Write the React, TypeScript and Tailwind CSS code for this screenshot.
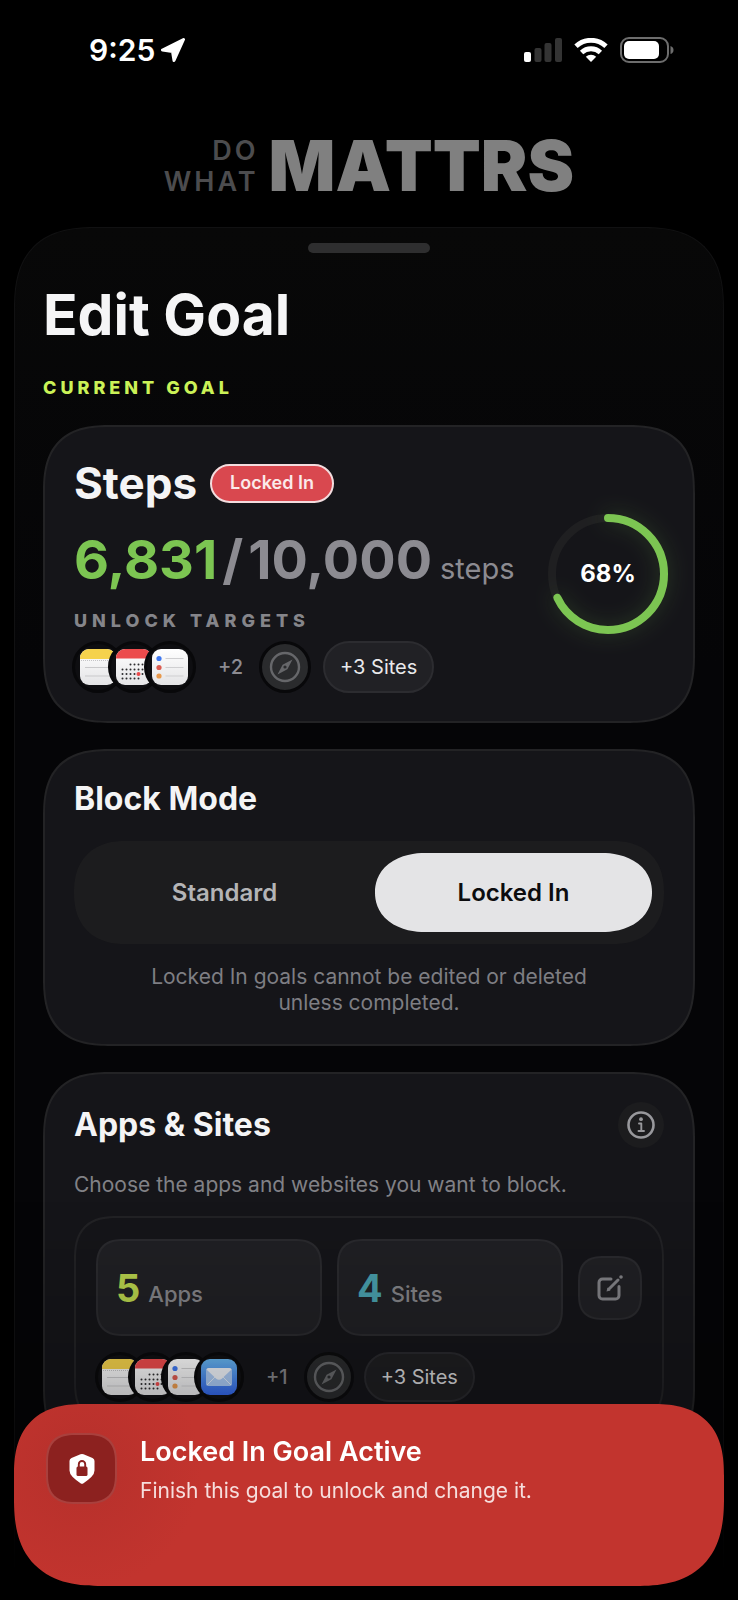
import type { ReactNode } from "react";

const notes = (
  <svg viewBox="0 0 36 36" className="h-9 w-9">
    <defs>
      <linearGradient id="paper" x1="0" y1="0" x2="0" y2="1">
        <stop offset="0" stopColor="#ffffff" />
        <stop offset="1" stopColor="#e4e4e6" />
      </linearGradient>
    </defs>
    <rect width="36" height="36" rx="9" fill="url(#paper)" />
    <path d="M0 10V9a9 9 0 0 1 9-9h18a9 9 0 0 1 9 9v1z" fill="#f5d24c" />
    <path d="M1 11.500h34" stroke="#c4c4c6" strokeWidth="1" strokeDasharray="1 1" />
    <path d="M5 18.500h26M5 27h26" stroke="#c9c9cb" strokeWidth="1" />
  </svg>
);

const calendar = (
  <svg viewBox="0 0 36 36" className="h-9 w-9">
    <rect width="36" height="36" rx="9" fill="url(#paper)" />
    <path d="M0 9.500V9a9 9 0 0 1 9-9h18a9 9 0 0 1 9 9v.5z" fill="#ec4b4c" />
    <g stroke="#2c2c2e" strokeWidth="2" strokeLinecap="round" strokeDasharray="0 4">
      <path d="M14.500 15.500h17" />
      <path d="M6.500 20.500h25" />
      <path d="M6.500 25h25" />
      <path d="M6.500 29.500h17" />
    </g>
    <circle cx="22.500" cy="25" r="2" fill="#ec4b4c" />
  </svg>
);

const reminders = (
  <svg viewBox="0 0 36 36" className="h-9 w-9">
    <rect width="36" height="36" rx="9" fill="url(#paper)" />
    <path d="M13.500 9.500h18M13.500 18.500h18M13.500 27h18" stroke="#cfcfd1" strokeWidth="1" />
    <circle cx="7" cy="9.500" r="2.600" fill="#3f78f0" />
    <circle cx="7" cy="18.500" r="2.600" fill="#dc5b50" />
    <circle cx="7" cy="27" r="2.600" fill="#e8994c" />
  </svg>
);

const mail = (
  <svg viewBox="0 0 36 36" className="h-9 w-9">
    <defs>
      <linearGradient id="sky" x1="0" y1="0" x2="0" y2="1">
        <stop offset="0" stopColor="#66b4ee" />
        <stop offset="1" stopColor="#3264e6" />
      </linearGradient>
    </defs>
    <rect width="36" height="36" rx="9" fill="url(#sky)" />
    <rect x="5" y="9" width="26" height="18" rx="2.500" fill="#a9c8f2" />
    <path d="M6 26l9-9M30 26l-9-9" stroke="#dfe9f8" strokeWidth="1" />
    <path d="M5.500 10.500Q6 9 7.500 9h21Q30 9 30.500 10.500l-9.500 9q-3 2.500-6 0z" fill="#eef2f8" />
  </svg>
);

function AppCircle({ small, children }: { small?: boolean; children: ReactNode }) {
  return (
    <li
      className={
        small
          ? "-ml-[17px] flex h-[50px] w-[50px] items-center justify-center rounded-full border-[3px] border-[#0a0a0c] bg-[#111114] first:-ml-px"
          : "-ml-4 flex h-[52px] w-[52px] items-center justify-center rounded-full border-[3px] border-[#08080a] bg-[#0e0e11] first:-ml-0.5"
      }
    >
      {children}
    </li>
  );
}

function Compass({ small }: { small?: boolean }) {
  return (
    <span
      className={
        small
          ? "ml-4 flex h-[50px] w-[50px] items-center justify-center rounded-full border-[3px] border-[#0c0c0e] bg-[#2a2b2d]"
          : "ml-4 flex h-[52px] w-[52px] items-center justify-center rounded-full border-[3px] border-[#08080a] bg-[#2a2b2d]"
      }
    >
      <svg viewBox="0 0 32 32" className="h-8 w-8" fill="none">
        <circle cx="16" cy="16" r="14" stroke="#66676a" strokeWidth="2.400" />
        <path
          d="M23.500 8.500L18.400 18.200 8.500 23.500 13.600 13.800zM16 14.400a1.600 1.600 0 1 0 0 3.200 1.600 1.600 0 0 0 0-3.200z"
          fill="#66676a"
          fillRule="evenodd"
        />
      </svg>
    </span>
  );
}

function SitesPill({ small }: { small?: boolean }) {
  return (
    <span
      className={
        small
          ? "ml-2.5 flex h-[50px] items-center rounded-full border-2 border-[#29292d] bg-[#1e1e21] px-[15px] text-xl text-[#d2d2d4]"
          : "ml-3 flex h-[52px] items-center rounded-full border-2 border-[#2c2c30] bg-[#212125] px-[15px] text-xl text-[#e9e9eb]"
      }
    >
      +3 Sites
    </span>
  );
}

function Card({ children }: { children: ReactNode }) {
  return (
    <section className="mt-[26px] rounded-[68px] border-2 border-[#232325] bg-[#151519] px-[29px] py-7 [corner-shape:superellipse(1.4)]">
      {children}
    </section>
  );
}

function StatusBar() {
  return (
    <header className="flex h-[100px] shrink-0 items-center justify-between pr-[64px] pl-[89px]">
      <div className="flex items-center gap-1.5 text-[30px] leading-9 font-semibold text-white">
        <span>9:25</span>
        <svg viewBox="0 0 24 24" className="h-6 w-6" fill="#fff" stroke="#fff" strokeWidth="3" strokeLinejoin="round">
          <path d="M22.500 1.500L1.500 12 11.500 13.500 13 22.500z" />
        </svg>
      </div>
      <div className="flex items-center gap-3">
        <svg viewBox="0 0 38 24" className="h-6 w-[38px]">
          <rect x="0" y="14" width="7" height="10" rx="2" fill="#fff" />
          <rect x="10.500" y="10" width="7" height="14" rx="2" fill="#343434" />
          <rect x="20.500" y="5" width="7" height="19" rx="2" fill="#343434" />
          <rect x="31" y="0" width="7" height="24" rx="2" fill="#343434" />
        </svg>
        <svg viewBox="0 0 34 24" className="h-6 w-[34px]" fill="none" stroke="#fff" strokeWidth="4.800">
          <path d="M2 8.300a21.600 21.600 0 0 1 30 0" />
          <path d="M7.600 14.500a13.700 13.700 0 0 1 18.800 0" />
          <path d="M17 24l-5.200-5.200a7.500 7.500 0 0 1 10.400 0z" fill="#fff" stroke="none" />
        </svg>
        <svg viewBox="0 0 54 26" className="h-[26px] w-[54px]">
          <rect x="1" y="1" width="47" height="24" rx="8" fill="none" stroke="#6d6d6d" strokeWidth="2" />
          <rect x="4" y="4" width="35" height="18" rx="5" fill="#fff" />
          <path d="M50.500 9v8q3-1 3-4t-3-4z" fill="#6d6d6d" />
        </svg>
      </div>
    </header>
  );
}

function ProgressRing({ percent }: { percent: number }) {
  return (
    <div className="relative flex h-28 w-28 shrink-0 items-center justify-center">
      <svg viewBox="0 0 112 112" className="absolute inset-0 -rotate-90 overflow-visible" fill="none" strokeWidth="8">
        <circle cx="56" cy="56" r="56" stroke="#1f1f21" />
        <circle
          cx="56"
          cy="56"
          r="56"
          stroke="#7cc552"
          strokeLinecap="round"
          pathLength="100"
          strokeDasharray={`${percent} 100`}
          className="drop-shadow-[0_0_10px_#7cc55240]"
        />
      </svg>
      <span className="relative text-2xl font-bold text-white">{percent}%</span>
    </div>
  );
}

function CurrentGoal() {
  return (
    <Card>
      <div className="flex items-center justify-between">
        <div>
          <div className="flex items-center gap-[13px]">
            <h2 className="text-[44px] leading-[56px] font-bold text-[#f4f4f5]">Steps</h2>
            <span className="flex h-[39px] items-center rounded-full border-2 border-[#f3dcde] bg-[#d9484f] px-[18px] text-lg font-semibold text-[#fbeaeb]">
              Locked In
            </span>
          </div>
          <p className="mt-[17px] flex items-baseline text-[54px] leading-[64px] font-bold text-[#8c8b91]">
            <span className="text-[#7cc552]">6,831</span>
            <span className="mx-[5px]">/</span>
            <span>10,000</span>
            <span className="ml-2 text-[29px] leading-9 font-normal">steps</span>
          </p>
          <h3 className="mt-[17px] text-lg leading-6 font-extrabold tracking-[5px] text-[#85858a]">UNLOCK TARGETS</h3>
          <div className="mt-2 flex items-center">
            <ul className="flex">
              <AppCircle>{notes}</AppCircle>
              <AppCircle>{calendar}</AppCircle>
              <AppCircle>{reminders}</AppCircle>
            </ul>
            <span className="ml-[22px] text-xl font-medium text-[#8c8b91]">+2</span>
            <Compass />
            <SitesPill />
          </div>
        </div>
        <ProgressRing percent={68} />
      </div>
    </Card>
  );
}

function BlockMode() {
  return (
    <Card>
      <h2 className="text-[32px] leading-10 font-bold text-[#f4f4f5]">Block Mode</h2>
      <div className="mt-[22px] grid h-[103px] grid-cols-2 gap-3 rounded-[51px] bg-[#1c1c1e] p-3 [corner-shape:superellipse(1.2)]">
        <button type="button" aria-pressed="false" className="text-2xl font-semibold text-[#b4b4b6]">
          Standard
        </button>
        <button
          type="button"
          aria-pressed="true"
          className="rounded-[50px/39px] bg-[#e4e4e6] text-2xl font-semibold text-[#0c0c0e] [corner-shape:superellipse(1.1)]"
        >
          Locked In
        </button>
      </div>
      <p className="mx-auto mt-5 max-w-[460px] text-center text-[21px] leading-[26px] text-[#7e7e83]">
        Locked In goals cannot be edited or deleted unless completed.
      </p>
    </Card>
  );
}

function AppsAndSites() {
  return (
    <Card>
      <div className="flex items-center justify-between">
        <h2 className="text-[32px] leading-10 font-bold text-[#f4f4f5]">Apps &amp; Sites</h2>
        <button
          type="button"
          aria-label="About apps and sites"
          className="flex h-[46px] w-[46px] items-center justify-center rounded-full bg-[#1c1c1e]"
        >
          <svg viewBox="0 0 28 28" className="h-7 w-7" fill="none" stroke="#98989c" strokeLinecap="round" strokeLinejoin="round">
            <circle cx="14" cy="14" r="12.500" strokeWidth="2.600" />
            <path d="M12 12.500h2.300v7M11.500 20h5.500" strokeWidth="1.900" />
            <circle cx="14" cy="8.200" r="1.900" fill="#98989c" stroke="none" />
          </svg>
        </button>
      </div>
      <p className="mt-6 text-[21px] leading-[26px] text-[#818186]">Choose the apps and websites you want to block.</p>
      <div className="mt-[18px] rounded-[44px] border-2 border-[#222225] px-5 py-[21px] [corner-shape:superellipse(1.4)]">
        <div className="flex items-center gap-[15px]">
          <div className="flex h-[97px] flex-1 items-center rounded-[28px] border-2 border-[#2a2a2e] bg-[#202024] px-[18px] [corner-shape:superellipse(1.4)]">
            <p className="flex items-baseline gap-2 text-[38px] leading-[46px] font-bold text-[#b6d04c]">
              5 <span className="text-[22px] leading-7 font-medium text-[#828286]">Apps</span>
            </p>
          </div>
          <div className="flex h-[97px] flex-1 items-center rounded-[28px] border-2 border-[#2a2a2e] bg-[#202024] px-[18px] [corner-shape:superellipse(1.4)]">
            <p className="flex items-baseline gap-2 text-[38px] leading-[46px] font-bold text-[#489daa]">
              4 <span className="text-[22px] leading-7 font-medium text-[#828286]">Sites</span>
            </p>
          </div>
          <button
            type="button"
            aria-label="Edit apps and sites"
            className="flex h-16 w-16 items-center justify-center rounded-[26px] border-2 border-[#2a2a2e] bg-[#202024] [corner-shape:superellipse(1.4)]"
          >
            <svg viewBox="0 0 26 26" className="h-[26px] w-[26px]" fill="none" stroke="#818185" strokeWidth="3" strokeLinecap="round">
              <path d="M14 4H5.500A3.500 3.500 0 0 0 2 7.500v13A3.500 3.500 0 0 0 5.500 24h13a3.500 3.500 0 0 0 3.500-3.500V11.500" />
              <path d="M9.500 16.500l1-4 3 3z" fill="#818185" stroke="none" />
              <path d="M12 14L21 5" />
              <circle cx="24" cy="2" r="1.800" fill="#818185" stroke="none" />
            </svg>
          </button>
        </div>
        <div className="mt-4 flex items-center">
          <ul className="flex">
            <AppCircle small>{notes}</AppCircle>
            <AppCircle small>{calendar}</AppCircle>
            <AppCircle small>{reminders}</AppCircle>
            <AppCircle small>{mail}</AppCircle>
          </ul>
          <span className="ml-[22px] text-xl font-medium text-[#828286]">+1</span>
          <Compass small />
          <SitesPill small />
        </div>
      </div>
    </Card>
  );
}

function LockedToast() {
  return (
    <div
      role="status"
      className="fixed inset-x-3.5 bottom-3.5 flex h-[182px] items-start gap-[23px] rounded-t-[72px] rounded-b-[88px] bg-[#c2342e] bg-[radial-gradient(circle_at_68px_65px,#b9312c_30px,#c2342e_120px)] px-8 pt-[29px] [corner-shape:superellipse(1.35)]"
    >
      <div className="flex h-[71px] w-[71px] shrink-0 items-center justify-center rounded-[30px] border-2 border-[#a9403d] bg-[#8c211f] [corner-shape:superellipse(1.4)]">
        <svg viewBox="0 0 26 30" className="h-[30px] w-[26px]">
          <path
            d="M13 0q.8 0 1.500.3l9 3.600Q25.500 4.700 25.500 7v9.500q0 3.500-3.200 6.500-3 3-7.800 6.200-1.500 1-3 0Q6.700 26 3.700 23 .5 20 .5 16.500V7q0-2.300 2-3.100l9-3.600Q12.200 0 13 0z"
            fill="#fff"
          />
          <rect x="7.500" y="12.500" width="11" height="9.500" rx="1.500" fill="#8c211f" />
          <path d="M9.800 13v-2.800a3.200 3.200 0 0 1 6.400 0V13" fill="none" stroke="#8c211f" strokeWidth="1.900" />
        </svg>
      </div>
      <div>
        <h2 className="text-[27px] leading-[38px] font-semibold text-white">Locked In Goal Active</h2>
        <p className="mt-[7px] text-[21px] leading-[26px] text-[#f6dedd]">Finish this goal to unlock and change it.</p>
      </div>
    </div>
  );
}

export default function App() {
  return (
    <div className="flex h-screen flex-col overflow-hidden bg-black font-[Inter,sans-serif]">
      <StatusBar />
      <div className="mt-[35px] flex shrink-0 items-center justify-center gap-2.5">
        <p className="flex flex-col items-end text-[27px] leading-[31px] font-semibold tracking-[3px] text-[#4c4c4e]">
          <span>DO</span>
          <span>WHAT</span>
        </p>
        <p className="text-[70px] leading-[62px] font-black text-[#808080]">MATTRS</p>
      </div>
      <main className="mx-3.5 mt-[30px] shrink-0 rounded-t-[84px] border border-b-0 border-[#111112] bg-linear-to-b from-[#080808] to-[#050507] to-30% px-7 pt-[15px] pb-60 [corner-shape:superellipse(1.4)]">
        <div className="mx-auto h-2.5 w-[122px] rounded-full bg-[#2e2e2f]"></div>
        <h1 className="mt-8 text-[57px] leading-[60px] font-bold text-[#f5f5f6]">Edit Goal</h1>
        <p className="mt-8 text-lg leading-[22px] font-extrabold tracking-[4px] text-[#cbf257]">CURRENT GOAL</p>
        <CurrentGoal />
        <BlockMode />
        <AppsAndSites />
      </main>
      <div className="pointer-events-none fixed inset-x-0 bottom-0 h-[400px] bg-linear-to-b from-transparent via-black/20 via-50% to-black to-95%"></div>
      <LockedToast />
    </div>
  );
}
